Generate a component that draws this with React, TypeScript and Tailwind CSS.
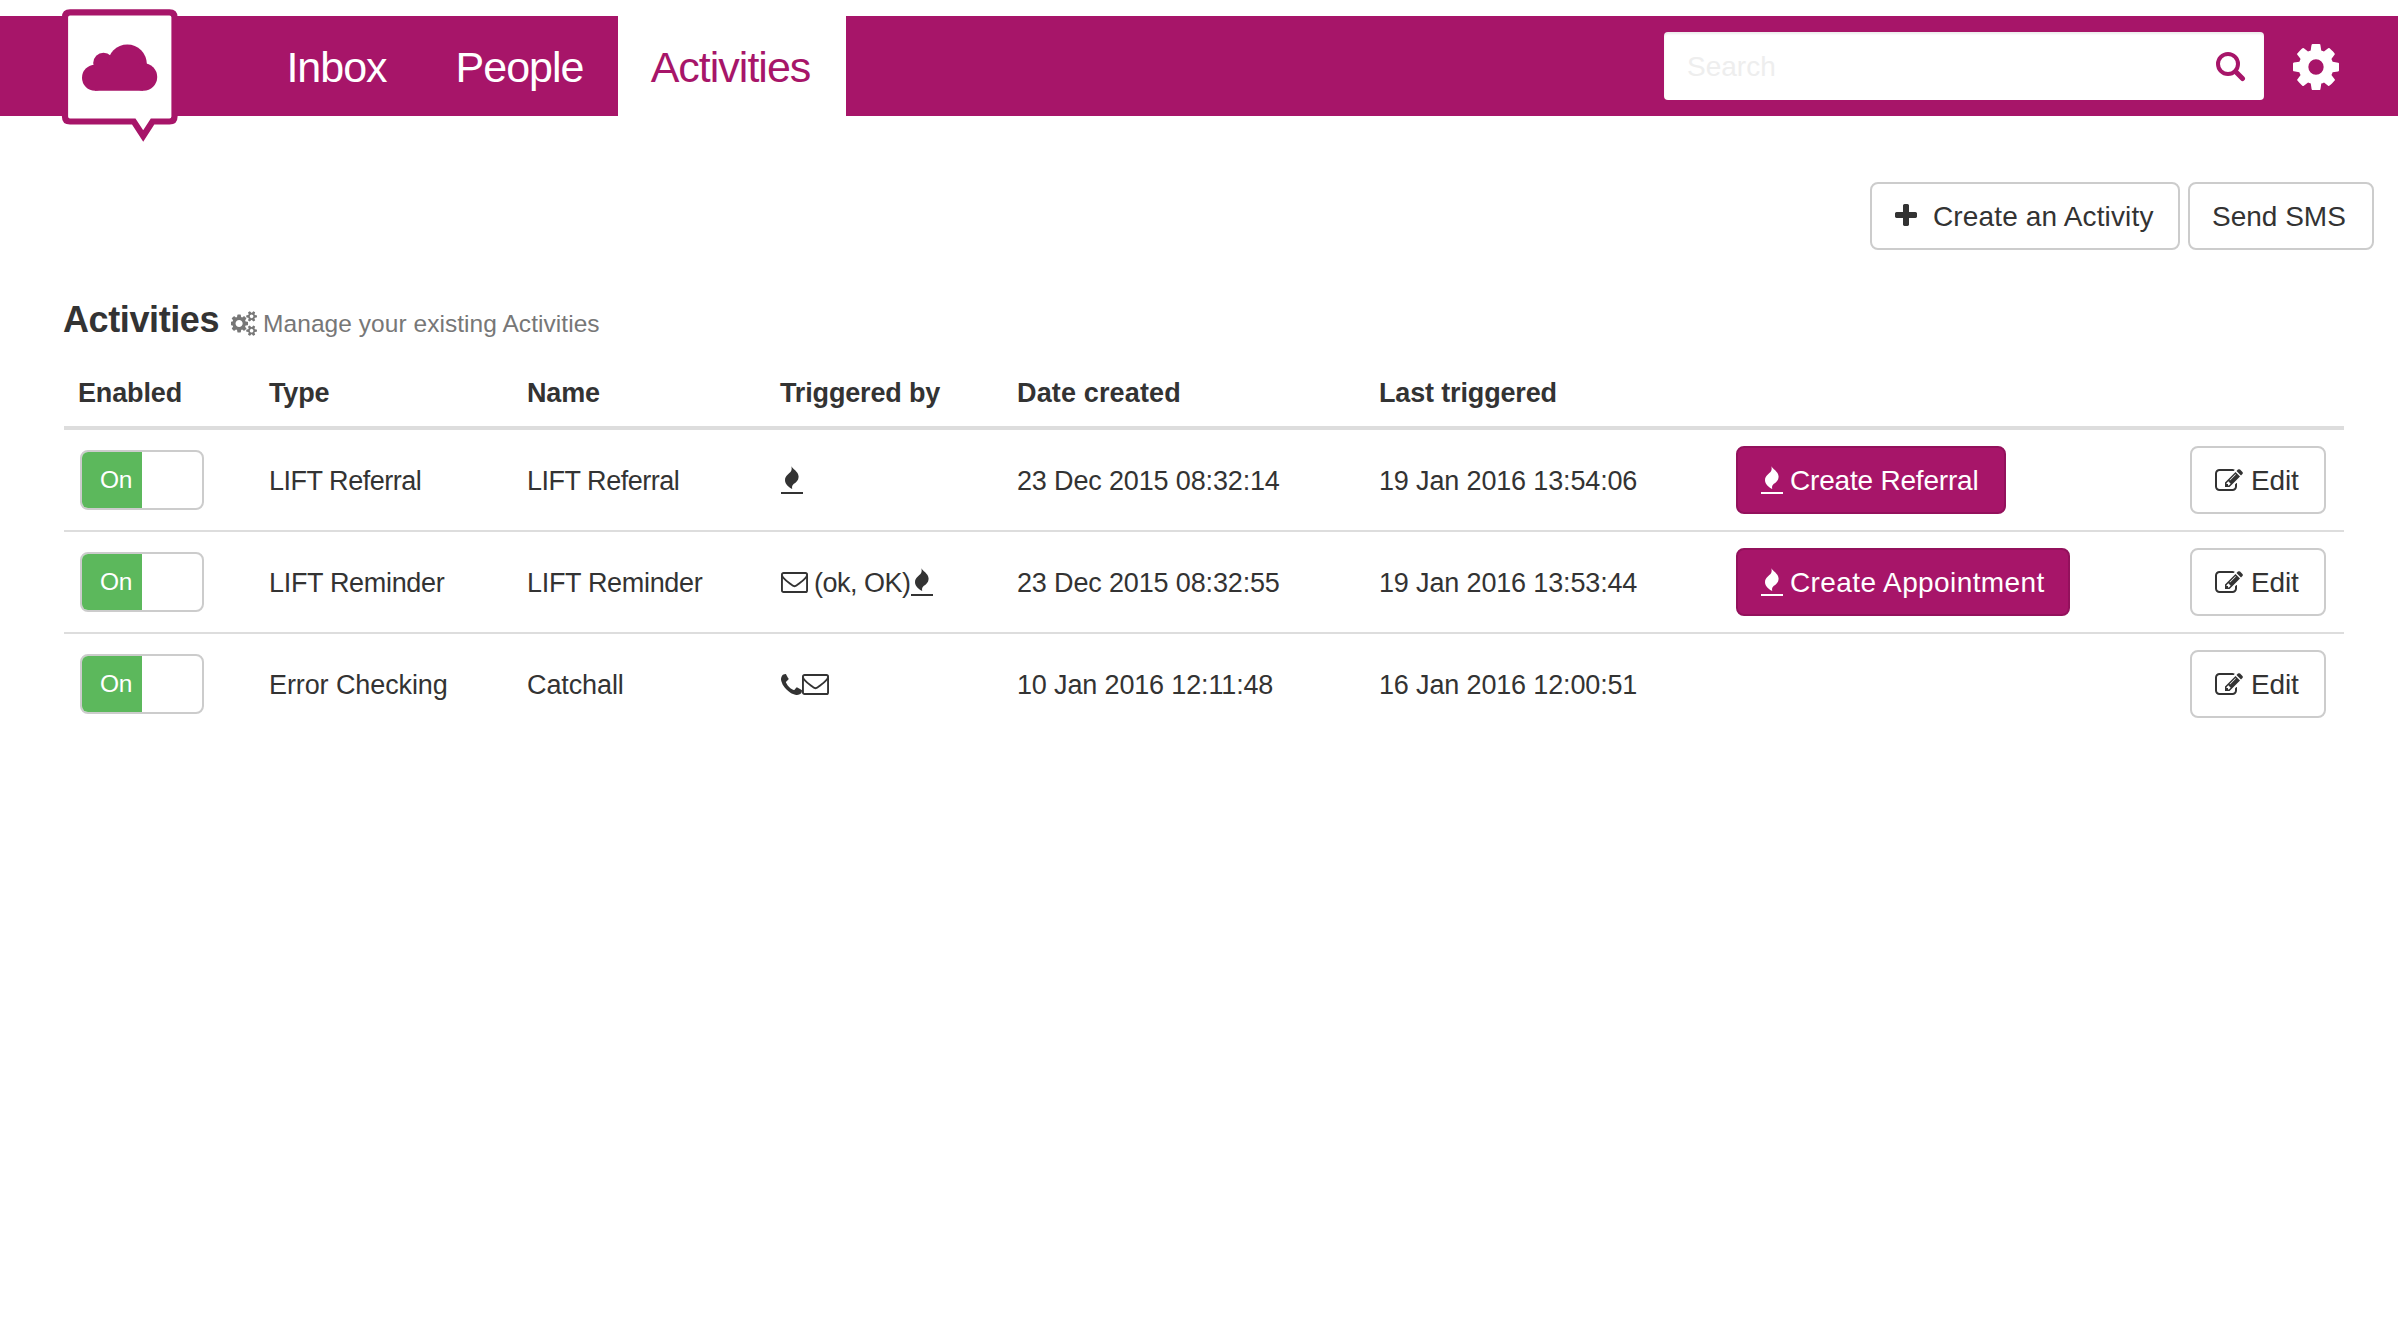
import React from "react";

const PATHS = {
  cog: "M1152 896q0-106-75-181t-181-75-181 75-75 181 75 181 181 75 181-75 75-181zm512-109v222q0 12-8 23t-20 13l-185 28q-19 54-39 91 35 50 107 138 10 12 10 25t-9 23q-27 37-99 108t-94 71q-12 0-26-9l-138-108q-44 23-91 38-16 136-29 186-7 28-36 28h-222q-14 0-24.5-8.5t-11.5-21.5l-28-184q-49-16-90-37l-141 107q-10 9-25 9-14 0-25-11-126-114-165-168-7-10-7-23 0-12 8-23 15-21 51-66.5t54-70.5q-27-50-41-99l-183-27q-13-2-21-12.5t-8-23.5v-222q0-12 8-23t19-13l186-28q14-46 39-92-40-57-107-138-10-12-10-24 0-10 9-23 26-36 98.500-107.500t94.500-71.500q13 0 26 10l138 107q44-23 91-38 16-136 29-186 7-28 36-28h222q14 0 24.500 8.500t11.500 21.500l28 184q49 16 90 37l142-107q9-9 24-9 13 0 25 10 129 119 165 170 7 8 7 22 0 12-8 23-15 21-51 66.500t-54 70.500q26 50 41 98l183 28q13 2 21 12.500t8 23.500z",
  cogs: "M832 896q0-106-75-181t-181-75-181 75-75 181 75 181 181 75 181-75 75-181zm768 512q0-52-38-90t-90-38-90 38-38 90q0 53 37.5 90.5t90.5 37.5 90.5-37.5 37.5-90.5zm0-1024q0-52-38-90t-90-38-90 38-38 90q0 53 37.5 90.5t90.5 37.5 90.5-37.5 37.5-90.5zm-384 421v185q0 10-7 19.5t-16 10.5l-155 24q-11 35-32 76 34 48 90 115 7 11 7 20 0 12-7 19-23 30-82.5 89.5t-78.5 59.5q-11 0-21-7l-115-90q-37 19-77 31-11 108-23 155-7 24-30 24h-186q-11 0-20-7.5t-10-17.5l-23-153q-34-10-75-31l-118 89q-7 7-20 7-11 0-21-8-144-133-144-160 0-9 7-19 10-14 41-53t47-61q-23-44-35-82l-152-24q-10-1-17-9.5t-7-19.5v-185q0-10 7-19.500t16-10.500l155-24q11-35 32-76-34-48-90-115-7-11-7-20 0-12 7-20 22-30 82-89t79-59q11 0 21 7l115 90q34-18 77-32 11-108 23-154 7-24 30-24h186q11 0 20 7.500t10 17.500l23 153q34 10 75 31l118-89q8-7 20-7 11 0 21 8 144 133 144 160 0 8-7 19-12 16-42 54t-45 60q23 48 34 82l152 23q10 2 17 10.500t7 19.500zm640 533v140q0 16-149 31-12 27-30 52 51 113 51 138 0 4-4 7-122 71-124 71-8 0-46-47t-52-68q-20 2-30 2t-30-2q-14 21-52 68t-46 47q-2 0-124-71-4-3-4-7 0-25 51-138-18-25-30-52-149-15-149-31v-140q0-16 149-31 13-29 30-52-51-113-51-138 0-4 4-7 4-2 35-20t59-34 30-16q8 0 46 46.5t52 67.5q20-2 30-2t30 2q51-71 92-112l6-2q4 0 124 70 4 3 4 7 0 25-51 138 17 23 30 52 149 15 149 31zm0-1024v140q0 16-149 31-12 27-30 52 51 113 51 138 0 4-4 7-122 71-124 71-8 0-46-47t-52-68q-20 2-30 2t-30-2q-14 21-52 68t-46 47q-2 0-124-71-4-3-4-7 0-25 51-138-18-25-30-52-149-15-149-31v-140q0-16 149-31 13-29 30-52-51-113-51-138 0-4 4-7 4-2 35-20t59-34 30-16q8 0 46 46.5t52 67.5q20-2 30-2t30 2q51-71 92-112l6-2q4 0 124 70 4 3 4 7 0 25-51 138 17 23 30 52 149 15 149 31z",
  phone: "M1600 1240q0 27-10 70.5t-21 68.5q-21 50-122 106-94 51-186 51-27 0-53-3.5t-57.5-12.5-47-14.5-55.5-20.5-49-18q-98-35-175-83-127-79-264-216t-216-264q-48-77-83-175-3-9-18-49t-20.5-55.5-14.5-47-12.5-57.5-3.5-53q0-92 51-186 56-101 106-122 25-11 68.5-21t70.5-10q14 0 21 3 18 6 53 76 11 19 30 54t35 63.5 31 53.5q3 4 17.500 25t21.500 35.500 7 28.500q0 20-28.500 50t-62 55-62 53-28.500 46q0 9 5 22.500t8.500 20.500 14 24 11.500 19q76 137 174 235t235 174q2 1 19 11.500t24 14 20.500 8.500 22.500 5q18 0 46-28.500t53-62 55-62 50-28.500q14 0 28.500 7t35.500 21.500 25 17.500q25 15 53.500 31t63.500 35 54 30q70 35 76 53 3 7 3 21z",
  edit: "M888 1184l116-116-152-152-116 116v56h96v96h56zm440-720q-16-16-33 1l-350 350q-17 17-1 33t33-1l350-350q17-17 1-33zm80 594v190q0 119-84.5 203.5t-203.5 84.5h-832q-119 0-203.5-84.5t-84.5-203.5v-832q0-119 84.5-203.5t203.5-84.5h832q63 0 117 25 15 7 18 23 3 17-9 29l-49 49q-14 14-32 8-23-6-45-6h-832q-66 0-113 47t-47 113v832q0 66 47 113t113 47h832q66 0 113-47t47-113v-126q0-13 9-22l64-64q15-15 35-7t20 29zm-96-738l288 288-672 672h-288v-288zm444 132l-92 92-288-288 92-92q28-28 68-28t68 28l152 152q28 28 28 68t-28 68z",
  plus: "M1600 736v192q0 40-28 68t-68 28h-416v416q0 40-28 68t-68 28h-192q-40 0-68-28t-28-68v-416h-416q-40 0-68-28t-28-68v-192q0-40 28-68t68-28h416v-416q0-40 28-68t68-28h192q40 0 68 28t28 68v416h416q40 0 68 28t28 68z",
};

function Glyph({ path, box, className }: { path: string; box: string; className: string }) {
  return (
    <svg viewBox={box} className={`shrink-0 ${className}`} fill="currentColor">
      <path d={path} />
    </svg>
  );
}

const EditIcon = () => <Glyph path={PATHS.edit} box="0 128 1792 1408" className="h-[22px] w-7" />;
const PhoneIcon = () => <Glyph path={PATHS.phone} box="192 128 1408 1408" className="h-[21px] w-[21px]" />;

const FlameIcon = () => (
  <svg viewBox="0 0 22 28" className="h-7 w-[22px] shrink-0" fill="currentColor">
    <path d="M10.300 0C11 2.700 17.600 5.300 17.600 10.600C17.600 15.300 14.300 16.700 12 18.700C10.700 20 11 22 11.300 23C8.500 21.400 4 18.700 4 14.200C4 9.500 8.300 8 10 5.300C11 3.600 10.700 1.500 10.300 0Z" />
    <path d="M0 26h22v2H0z" />
  </svg>
);

const MailIcon = () => (
  <svg viewBox="0 0 27 21" className="h-[21px] w-[27px] shrink-0" fill="none" stroke="currentColor" strokeWidth="1.9">
    <rect x="0.950" y="0.950" width="25.100" height="19.100" rx="1.600" />
    <path d="M1 3.500C2 6.500 5.500 9 8.500 11.200C10.500 12.800 12 14.200 13.500 14.200S16.500 12.800 18.500 11.200C21.500 9 25 6.500 26 3.500" />
  </svg>
);

function Logo() {
  return (
    <svg viewBox="60 6 120 138" className="absolute left-[60px] top-[6px] z-10 h-[138px] w-[120px]">
      <path
        d="M70 12.300H169.500Q174.500 12.300 174.500 17.300V116.500Q174.500 121.500 169.500 121.500H152.500L143.200 136L133.800 121.500H70Q65 121.500 65 116.500V17.300Q65 12.300 70 12.300Z"
        fill="#fff"
        stroke="#a71569"
        strokeWidth="6.200"
      />
      <g fill="#a71569">
        <circle cx="95" cy="77.700" r="13" />
        <circle cx="103.500" cy="63" r="10.300" />
        <circle cx="127.300" cy="64.200" r="19.600" />
        <circle cx="143.500" cy="77" r="13.700" />
        <path d="M95 64h48v26.700H95z" />
      </g>
    </svg>
  );
}

function Button({ className, children }: { className: string; children: React.ReactNode }) {
  return (
    <button className={`flex h-[68px] items-center whitespace-nowrap rounded-lg border-2 text-[28px] leading-none ${className}`}>
      {children}
    </button>
  );
}

function Toggle() {
  return (
    <div className="flex h-[60px] w-[124px] overflow-hidden rounded-lg border-2 border-[#ccc] bg-white">
      <div className="flex w-[60px] items-center bg-[#5cb85c] pl-[18px] text-[24.500px] leading-none tracking-[-0.300px] text-white">
        <span>On</span>
      </div>
    </div>
  );
}

const COLS = "grid grid-cols-[205px_258px_254px_236px_362px_357px_454px_154px] items-center";

const ROWS = [
  {
    type: "LIFT Referral",
    name: "LIFT Referral",
    tracking: "tracking-[-0.480px]",
    trigger: <FlameIcon />,
    created: "23 Dec 2015 08:32:14",
    last: "19 Jan 2016 13:54:06",
    action: "Create Referral",
    actionStyle: "w-[270px] tracking-[-0.200px]",
  },
  {
    type: "LIFT Reminder",
    name: "LIFT Reminder",
    tracking: "tracking-[-0.320px]",
    trigger: (
      <>
        <MailIcon />
        <span className="ml-[6px] pt-0.5 tracking-[-0.500px]">(ok, OK)</span>
        <FlameIcon />
      </>
    ),
    created: "23 Dec 2015 08:32:55",
    last: "19 Jan 2016 13:53:44",
    action: "Create Appointment",
    actionStyle: "w-[334px] tracking-[0.400px]",
  },
  {
    type: "Error Checking",
    name: "Catchall",
    tracking: "tracking-[-0.100px]",
    trigger: (
      <>
        <PhoneIcon />
        <MailIcon />
      </>
    ),
    created: "10 Jan 2016 12:11:48",
    last: "16 Jan 2016 12:00:51",
    action: "",
    actionStyle: "",
  },
];

export default function App() {
  return (
    <div className="relative h-[1340px] w-full overflow-hidden bg-white pt-4 font-['Liberation_Sans',sans-serif] text-[27px] leading-none tracking-[-0.150px] text-[#333]">
      <Logo />
      <header className="flex h-[100px] items-center bg-[#a71569] pl-[253px] pr-[59px]">
        <nav className="flex h-full text-[43px] tracking-[-1px] text-white">
          <a className="flex w-[170px] items-center justify-center pr-[3px] pt-0.5">Inbox</a>
          <a className="flex w-[195px] items-center justify-center pr-0.5 pt-0.5">People</a>
          <a className="flex w-[228px] items-center justify-center bg-white pr-[3px] pt-0.5 text-[#a71569]">Activities</a>
        </nav>
        <div className="ml-auto flex h-[68px] w-[600px] items-center justify-between rounded bg-white pl-[23px] pr-[18px] text-[28px] tracking-normal text-[#eee] shadow-[inset_0_2px_2px_rgba(0,0,0,0.075)]">
          <span className="pt-0.5">Search</span>
          <svg viewBox="0 0 30 30" className="mt-px h-[30px] w-[30px] text-[#a71569]" fill="none" stroke="currentColor">
            <circle cx="12" cy="12" r="10" strokeWidth="4" />
            <path d="M19.500 19.500L26.500 26.500" strokeWidth="5" strokeLinecap="round" />
          </svg>
        </div>
        <Glyph path={PATHS.cog} box="128 128 1536 1536" className="ml-[29px] mt-0.5 h-[46px] w-[46px] text-white" />
      </header>

      <div className="mt-[66px] flex justify-end gap-2 pr-6 tracking-normal">
        <Button className="w-[310px] border-[#ccc] pl-[23px]">
          <Glyph path={PATHS.plus} box="192 128 1408 1408" className="-mt-0.5 mr-4 h-[22px] w-[22px]" />
          <span className="pt-0.5 tracking-[0.150px]">Create an Activity</span>
        </Button>
        <Button className="w-[186px] border-[#ccc] pl-[22px]">
          <span className="pt-0.5">Send SMS</span>
        </Button>
      </div>

      <main className="ml-16 w-[2280px]">
        <h1 className="-ml-px flex h-[116px] items-baseline pt-[52px]">
          <span className="text-[36px] font-bold tracking-[-0.400px]">Activities</span>
          <span className="ml-3 flex items-baseline text-[24.500px] tracking-[0.050px] text-[#777]">
            <Glyph path={PATHS.cogs} box="0 0 1856 1792" className="mr-[6px] h-[25px] w-[26px] translate-y-1" />
            Manage your existing Activities
          </span>
        </h1>

        <div className={`${COLS} h-16 border-b-4 border-[#ddd] pb-1.5 font-bold`}>
          <span className="pl-[14px]">Enabled</span>
          <span>Type</span>
          <span>Name</span>
          <span className="-ml-px">Triggered by</span>
          <span className="tracking-[0.150px]">Date created</span>
          <span>Last triggered</span>
        </div>

        {ROWS.map((row) => (
          <div key={row.created} className={`${COLS} h-[102px] border-b-2 border-[#ddd] last:border-transparent`}>
            <div className="pl-4">
              <Toggle />
            </div>
            <span className={`pt-0.5 ${row.tracking}`}>{row.type}</span>
            <span className={`pt-0.5 ${row.tracking}`}>{row.name}</span>
            <div className="flex items-center">{row.trigger}</div>
            <span className="pt-0.5">{row.created}</span>
            <span className="pt-0.5">{row.last}</span>
            <div>
              {row.action && (
                <Button className={`border-[#93115c] bg-[#a71569] pl-[23px] text-white ${row.actionStyle}`}>
                  <FlameIcon />
                  <span className="ml-[7px] pt-0.5">{row.action}</span>
                </Button>
              )}
            </div>
            <Button className="w-[136px] border-[#ccc] pl-[23px]">
              <EditIcon />
              <span className="ml-2 pt-0.5">Edit</span>
            </Button>
          </div>
        ))}
      </main>
    </div>
  );
}
